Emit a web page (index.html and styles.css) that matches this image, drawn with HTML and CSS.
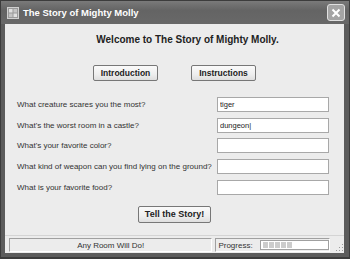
FILE: index.html
```html
<!DOCTYPE html>
<html lang="en">
<head>
  <meta charset="UTF-8">
  <title>The Story of Mighty Molly</title>
  <link rel="stylesheet" href="styles.css">
</head>
<body>
<div class="window">
  <div class="titlebar">
    <svg class="app-icon" width="12" height="12" viewBox="0 0 12 12">
      <rect x="0.5" y="0.5" width="11" height="11" fill="#9a9a9a" stroke="#d0d0d0"/>
      <rect x="2" y="2" width="3.5" height="3.5" fill="#e0e0e0"/>
      <rect x="6.5" y="2" width="3.5" height="3.5" fill="#c4c4c4"/>
      <rect x="2" y="6.5" width="3.5" height="3.5" fill="#c4c4c4"/>
      <rect x="6.5" y="6.5" width="3.5" height="3.5" fill="#e0e0e0"/>
    </svg>
    <span class="title">The Story of Mighty Molly</span>
    <div class="close-btn">
      <svg width="10" height="10" viewBox="0 0 10 10">
        <path d="M1.5 1.5 L8.5 8.5 M8.5 1.5 L1.5 8.5" stroke="#fff" stroke-width="2"/>
      </svg>
    </div>
  </div>
  <div class="client">
    <div class="welcome">Welcome to The Story of Mighty Molly.</div>
    <div class="top-buttons">
      <button class="btn">Introduction</button>
      <button class="btn">Instructions</button>
    </div>
    <div class="questions">
      <label>What creature scares you the most?</label>
      <input type="text" value="tiger">
      <label>What's the worst room in a castle?</label>
      <input type="text" value="dungeon|">
      <label>What's your favorite color?</label>
      <input type="text">
      <label>What kind of weapon can you find lying on the ground?</label>
      <input type="text">
      <label>What is your favorite food?</label>
      <input type="text">
    </div>
    <div class="tell-row">
      <button class="btn btn-tell">Tell the Story!</button>
    </div>
    <div class="statusbar">
      <div class="panel panel-msg">Any Room Will Do!</div>
      <div class="panel panel-progress">
        <span>Progress:</span>
        <div class="progress">
          <i></i><i></i><i></i><i></i><i></i>
        </div>
      </div>
      <svg class="grip" width="10" height="10" viewBox="0 0 10 10">
        <rect x="8" y="2" width="1" height="1" fill="#999"/>
        <rect x="5" y="5" width="1" height="1" fill="#999"/>
        <rect x="8" y="5" width="1" height="1" fill="#999"/>
        <rect x="2" y="8" width="1" height="1" fill="#999"/>
        <rect x="5" y="8" width="1" height="1" fill="#999"/>
        <rect x="8" y="8" width="1" height="1" fill="#999"/>
      </svg>
    </div>
  </div>
</div>
</body>
</html>
```

FILE: styles.css
```css
body {
  margin: 0;
  background: #e8e8e8;
  font-family: "Liberation Sans", Arial, sans-serif;
  color: #222;
}
.window {
  width: 350px;
  height: 259px;
  box-sizing: border-box;
  display: flex;
  flex-direction: column;
  background: #5c5c5c;
  border: 1px solid #3c3c3c;
  border-bottom-width: 2px;
}
.titlebar {
  height: 23px;
  display: flex;
  align-items: center;
  padding: 0 4px 0 6px;
  background: linear-gradient(#7a7a7a, #646464 40%, #686868);
}
.app-icon {
  margin-right: 4px;
}
.title {
  flex: 1;
  color: #fff;
  font-weight: bold;
  font-size: 9.5px;
}
.close-btn {
  width: 16px;
  height: 15px;
  border: 1px solid #e0e0e0;
  border-radius: 3px;
  background: #a4a4a4;
  display: flex;
  align-items: center;
  justify-content: center;
}
.client {
  flex: 1;
  margin: 0 5px 4px 4px;
  background: #ececec;
  display: flex;
  flex-direction: column;
}
.welcome {
  margin-top: 10px;
  padding-left: 26px;
  text-align: center;
  font-weight: bold;
  font-size: 10px;
  line-height: 11px;
}
.top-buttons {
  display: flex;
  justify-content: center;
  gap: 33px;
  margin-top: 20px;
}
.btn {
  font-family: "Liberation Sans", Arial, sans-serif;
  font-weight: bold;
  font-size: 8.5px;
  color: #222;
  height: 16px;
  width: 65px;
  padding: 0;
  background: linear-gradient(#fafafa, #eee 60%, #dedede);
  border: 1px solid #777;
  border-radius: 2px;
}
.questions {
  display: grid;
  grid-template-columns: 200px 112px;
  row-gap: 5.7px;
  align-items: center;
  margin-top: 16px;
  padding-left: 12px;
}
.questions label {
  font-size: 8px;
  color: #333;
}
.questions input {
  height: 15px;
  box-sizing: border-box;
  border: 1px solid #a8a8a8;
  background: #fff;
  font-family: "Liberation Sans", Arial, sans-serif;
  font-size: 7.5px;
  padding: 0 2px;
  color: #222;
  outline: none;
}
.tell-row {
  display: flex;
  justify-content: center;
  margin-top: 11px;
}
.btn-tell {
  width: 73px;
  height: 17px;
  font-size: 9px;
}
.statusbar {
  margin-top: auto;
  border-top: 1px solid #d4d4d4;
  padding: 2px 0 1px 4px;
  display: flex;
  align-items: flex-end;
  gap: 3px;
  font-size: 8px;
}
.panel {
  height: 14px;
  box-sizing: border-box;
  border: 1px solid;
  border-color: #a0a0a0 #fff #fff #a0a0a0;
  display: flex;
  align-items: center;
}
.panel-msg {
  width: 204px;
  justify-content: center;
  color: #333;
}
.panel-progress {
  width: 115px;
  padding-left: 2px;
  gap: 7px;
  color: #333;
}
.progress {
  flex: 1;
  height: 10px;
  box-sizing: border-box;
  border: 1px solid #a0a0a0;
  background: #fff;
  display: flex;
  gap: 1px;
  padding: 1px 2px;
}
.progress i {
  width: 5px;
  background: #ccc;
}
.grip {
  margin-left: 1px;
}
```
